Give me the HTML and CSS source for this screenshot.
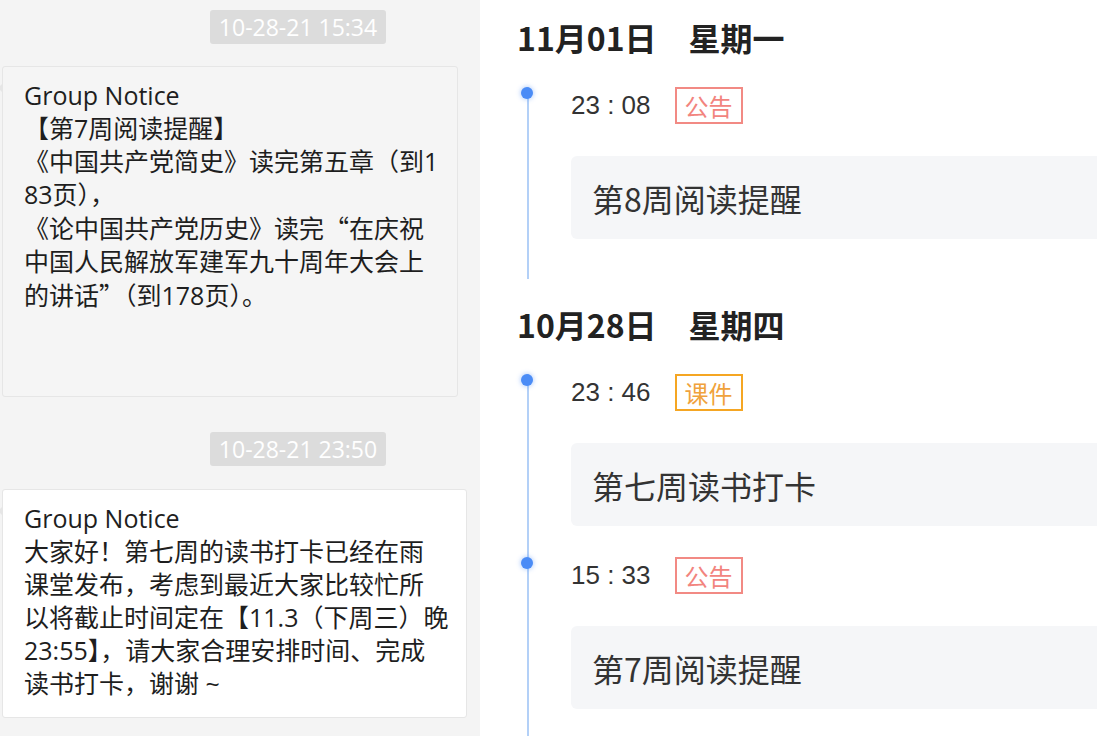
FILE: index.html
```html
<!DOCTYPE html>
<html lang="zh-CN">
<head>
    <meta charset="UTF-8">
    <meta name="viewport" content="width=device-width, initial-scale=1.0">
    <title>群公告</title>
    <link rel="stylesheet" href="styles.css">
</head>
<body>
    <div class="page">
        <section class="chat">
            <div class="stamp">10-28-21 15:34</div>
            <div class="bubble bubble-grey">
                Group Notice<br>
                【第7周阅读提醒】<br>
                《中国共产党简史》读完第五章（到1<br>
                83页），<br>
                《论中国共产党历史》读完<span class="cjk">“</span>在庆祝<br>
                中国人民解放军建军九十周年大会上<br>
                的讲话<span class="cjk">”</span>（到178页）。
            </div>

            <div class="stamp stamp-second">10-28-21 23:50</div>
            <div class="bubble bubble-white">
                Group Notice<br>
                大家好！第七周的读书打卡已经在雨<br>
                课堂发布，考虑到最近大家比较忙所<br>
                以将截止时间定在【11.3（下周三）晚<br>
                23:55】，请大家合理安排时间、完成<br>
                读书打卡，谢谢 ~
            </div>
        </section>

        <section class="timeline">
            <div class="day">
                <h2 class="day-title">11月01日<span class="weekday">星期一</span></h2>
                <div class="events">
                    <div class="event">
                        <div class="event-head">
                            <span class="time">23 : 08</span>
                            <span class="tag tag-notice">公告</span>
                        </div>
                        <div class="event-body">第8周阅读提醒</div>
                    </div>
                </div>
            </div>

            <div class="day day-next">
                <h2 class="day-title">10月28日<span class="weekday">星期四</span></h2>
                <div class="events">
                    <div class="event">
                        <div class="event-head">
                            <span class="time">23 : 46</span>
                            <span class="tag tag-course">课件</span>
                        </div>
                        <div class="event-body">第七周读书打卡</div>
                    </div>
                    <div class="event">
                        <div class="event-head">
                            <span class="time">15 : 33</span>
                            <span class="tag tag-notice">公告</span>
                        </div>
                        <div class="event-body">第7周阅读提醒</div>
                    </div>
                </div>
            </div>
        </section>
    </div>
</body>
</html>
```

FILE: styles.css
```css
body {
    margin: 0;
    font-family: "Open Sans", "Noto Sans CJK SC", sans-serif;
    background: #fff;
}
.page {
    display: flex;
    height: 736px;
    overflow: hidden;
}
.cjk {
    font-family: "Noto Sans CJK SC", sans-serif;
}

/* chat column */
.chat {
    width: 480px;
    flex-shrink: 0;
    padding-top: 10px;
    box-sizing: border-box;
    background: #f4f4f4;
}
.stamp {
    width: 176px;
    height: 34px;
    margin-left: 210px;
    line-height: 34px;
    text-align: center;
    font-size: 23px;
    color: #fff;
    background: #dcdcdc;
    border-radius: 3px;
}
.stamp-second {
    margin-top: 35px;
}
.bubble {
    position: relative;
    margin-left: 2px;
    padding: 12px 10px 0 21px;
    box-sizing: border-box;
    border: 1px solid #e6e6e6;
    border-radius: 3px;
    font-size: 25px;
    line-height: 33px;
    color: #1e1e1e;
    white-space: nowrap;
}
.bubble::before {
    content: "";
    position: absolute;
    left: -5px;
    top: 16px;
    border: 5px solid transparent;
    border-left: 0;
    border-right-color: #e6e6e6;
}
.bubble-grey {
    width: 456px;
    height: 331px;
    margin-top: 22px;
    background: #f5f5f5;
}
.bubble-white {
    width: 465px;
    height: 229px;
    margin-top: 23px;
    background: #fff;
}

/* timeline column */
.timeline {
    flex: 1;
    padding: 17px 0 0 37px;
    overflow: hidden;
}
.day-next {
    margin-top: 25px;
}
.day-title {
    margin: 0;
    font-family: "Noto Sans CJK SC", sans-serif;
    font-size: 32px;
    line-height: 40px;
    font-weight: 700;
    color: #222;
}
.weekday {
    margin-left: 32px;
}
.events {
    margin: 30px 0 0 10px;
    padding: 0 0 40px 42px;
    border-left: 2px solid #b3d0f7;
}
.event {
    position: relative;
    margin-bottom: 31px;
}
.event:last-child {
    margin-bottom: 0;
}
.event::before {
    content: "";
    position: absolute;
    left: -50px;
    top: 0;
    width: 12px;
    height: 12px;
    border-radius: 50%;
    background: #4b8cf6;
    box-shadow: 0 0 4px 1px rgba(75, 140, 246, 0.35);
}
.event-head {
    display: flex;
    align-items: center;
    height: 37px;
}
.time {
    font-family: "Liberation Sans", sans-serif;
    font-size: 26px;
    color: #333;
}
.tag {
    margin-left: 24px;
    padding: 0 8px;
    border: 2px solid;
    font-family: "Noto Sans CJK SC", sans-serif;
    font-size: 24px;
    line-height: 33px;
}
.tag-notice {
    color: #f2847e;
    border-color: #f28a84;
}
.tag-course {
    color: #f0a23c;
    border-color: #f5a623;
}
.event-body {
    display: flex;
    align-items: center;
    width: 560px;
    height: 83px;
    margin-top: 32px;
    padding-left: 21px;
    box-sizing: border-box;
    font-family: "Noto Sans CJK SC", sans-serif;
    font-size: 32px;
    color: #333;
    background: #f5f6f8;
    border-radius: 6px;
}
```
